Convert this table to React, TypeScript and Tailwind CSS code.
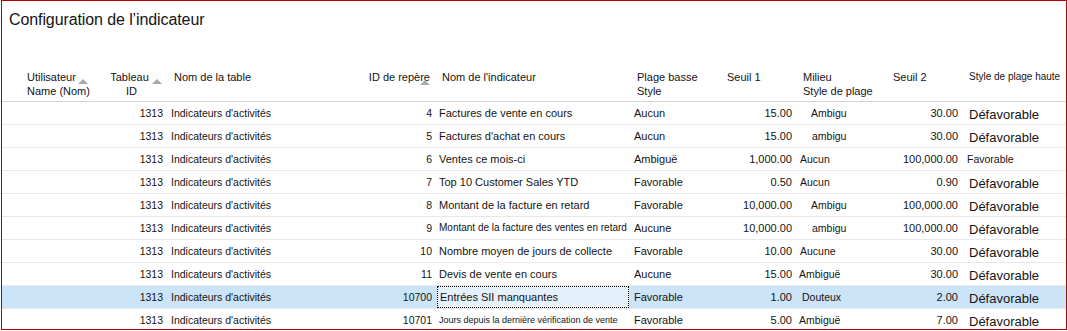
import React from "react";

type Row = {
  id: string;
  name: string;
  nameCls?: string;
  basse: string;
  s1: string;
  mid: string;
  midPl: string;
  s2: string;
  haute: string;
  sel?: boolean;
};

const rows: Row[] = [
  { id: "4", name: "Factures de vente en cours", basse: "Aucun", s1: "15.00", mid: "Ambigu", midPl: "pl-[15px]", s2: "30.00", haute: "Défavorable" },
  { id: "5", name: "Factures d'achat en cours", basse: "Aucun", s1: "15.00", mid: "ambigu", midPl: "pl-[16px]", s2: "30.00", haute: "Défavorable" },
  { id: "6", name: "Ventes ce mois-ci", basse: "Ambiguë", s1: "1,000.00", mid: "Aucun", midPl: "pl-[4px]", s2: "100,000.00", haute: "Favorable" },
  { id: "7", name: "Top 10 Customer Sales YTD", basse: "Favorable", s1: "0.50", mid: "Aucun", midPl: "pl-[4px]", s2: "0.90", haute: "Défavorable" },
  { id: "8", name: "Montant de la facture en retard", basse: "Favorable", s1: "10,000.00", mid: "Ambigu", midPl: "pl-[15px]", s2: "100,000.00", haute: "Défavorable" },
  { id: "9", name: "Montant de la facture des ventes en retard", nameCls: "text-[10px]", basse: "Aucune", s1: "10,000.00", mid: "ambigu", midPl: "pl-[16px]", s2: "100,000.00", haute: "Défavorable" },
  { id: "10", name: "Nombre moyen de jours de collecte", basse: "Favorable", s1: "10.00", mid: "Aucune", midPl: "pl-[4px]", s2: "30.00", haute: "Défavorable" },
  { id: "11", name: "Devis de vente en cours", basse: "Aucune", s1: "15.00", mid: "Ambiguë", midPl: "pl-[3px]", s2: "30.00", haute: "Défavorable" },
  { id: "10700", name: "Entrées SII manquantes", basse: "Favorable", s1: "1.00", mid: "Douteux", midPl: "pl-[6px]", s2: "2.00", haute: "Défavorable", sel: true },
  { id: "10701", name: "Jours depuis la dernière vérification de vente", nameCls: "text-[9px]", basse: "Favorable", s1: "5.00", mid: "Ambiguë", midPl: "pl-[3px]", s2: "7.00", haute: "Défavorable" },
];

const Arrow = ({ cls }: { cls: string }) => (
  <svg className={`absolute ${cls}`} width="10" height="5" viewBox="0 0 10 5">
    <polygon points="5,0 10,5 0,5" fill="#a9a9a9" />
  </svg>
);

export default function App() {
  return (
    <div
      className="ml-[1px] w-[1066px] h-[330px] border border-[#b00000] overflow-hidden bg-white text-[#141414]"
      style={{ fontFamily: '"Liberation Sans", Arial, sans-serif' }}
    >
      <div className="h-[69px] pt-[9px] pl-[7px]">
        <div className="text-[16px] leading-[20px] tracking-[-0.1px]">Configuration de l’indicateur</div>
      </div>

      {/* header */}
      <div className="flex h-[32px] border-b border-[#d6d6d6] text-[11px] leading-[14px]">
        <div className="relative w-[98px] shrink-0 pl-[25px]">
          <div>Utilisateur</div>
          <div>Name (Nom)</div>
          <Arrow cls="left-[76px] top-[9px]" />
        </div>
        <div className="relative w-[66px] shrink-0">
          <div className="ml-[10px] w-[39px] text-center">
            <div>Tableau</div>
            <div className="pl-[4px]">ID</div>
          </div>
          <Arrow cls="left-[52px] top-[9px]" />
        </div>
        <div className="w-[179px] shrink-0 pl-[8px]">Nom de la table</div>
        <div className="relative w-[90px] shrink-0 pr-[5px] text-right">
          ID de repère
          <Arrow cls="left-[75px] top-[10px]" />
        </div>
        <div className="w-[195px] shrink-0 pl-[7px]">Nom de l'indicateur</div>
        <div className="w-[70px] shrink-0 pl-[7px]">
          <div>Plage basse</div>
          <div>Style</div>
        </div>
        <div className="w-[96px] shrink-0 pl-[27px]">Seuil 1</div>
        <div className="w-[84px] shrink-0 pl-[7px]">
          <div>Milieu</div>
          <div>Style de plage</div>
        </div>
        <div className="w-[82px] shrink-0 pl-[13px]">Seuil 2</div>
        <div className="w-[104px] shrink-0 pl-[7px] text-[10px]">Style de plage haute</div>
      </div>

      {rows.map((r) => (
        <div
          key={r.id}
          className={`flex h-[23px] border-b border-[#e8e8e8] text-[11px] leading-[14px] ${r.sel ? "bg-[#cce4f7]" : ""}`}
        >
          <div className="w-[98px] shrink-0" />
          <div className="w-[66px] shrink-0 flex items-center justify-end pr-[3px] text-[10.5px]">1313</div>
          <div className="w-[179px] shrink-0 flex items-center pl-[5px] text-[10.5px]">Indicateurs d'activités</div>
          <div className="w-[90px] shrink-0 flex items-center justify-end pr-[3px] text-[10.5px]">{r.id}</div>
          <div className="w-[195px] shrink-0 flex items-center">
            {r.sel ? (
              <div className="ml-[2px] w-[192px] h-full flex items-center pl-[2px] border border-dotted border-black bg-[#e4f0fa]">
                {r.name}
              </div>
            ) : (
              <div className={`pl-[4px] whitespace-nowrap ${r.nameCls ?? ""}`}>{r.name}</div>
            )}
          </div>
          <div className="w-[70px] shrink-0 flex items-center pl-[4px]">{r.basse}</div>
          <div className="w-[96px] shrink-0 flex items-center justify-end pr-[4px]">{r.s1}</div>
          <div className={`w-[84px] shrink-0 flex items-center ${r.midPl} text-[10.5px]`}>{r.mid}</div>
          <div className="w-[82px] shrink-0 flex items-center justify-end pr-[4px]">{r.s2}</div>
          {r.haute === "Favorable" ? (
            <div className="w-[104px] shrink-0 flex items-center pl-[5px] text-[10.5px]">{r.haute}</div>
          ) : (
            <div className="w-[104px] shrink-0 flex items-center pl-[7px] pt-[4px] text-[13px]">{r.haute}</div>
          )}
        </div>
      ))}
    </div>
  );
}
